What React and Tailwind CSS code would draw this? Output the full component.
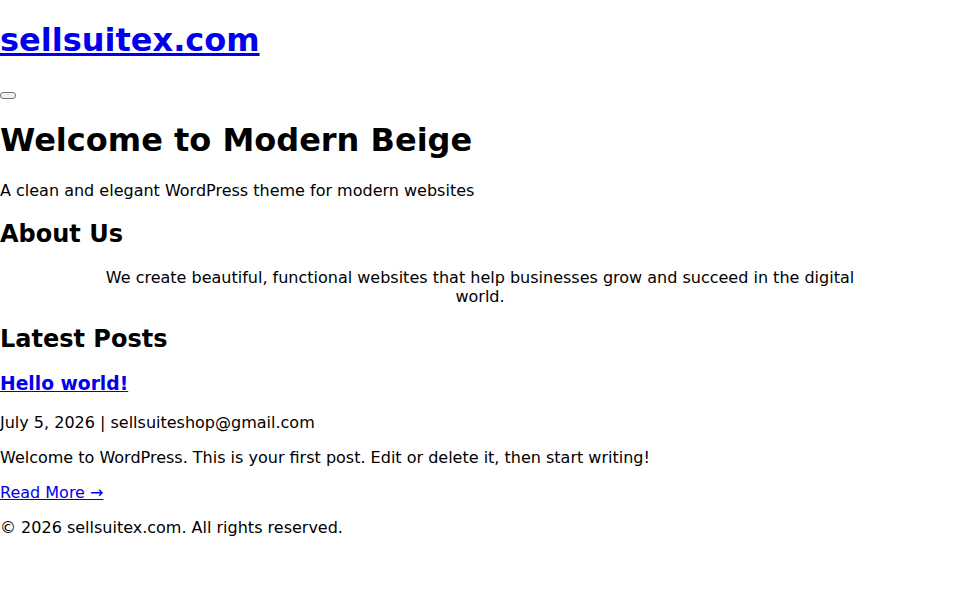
import React from 'react';

export default function App() {
  return (
    <div className="min-h-[600px] bg-white text-black font-['DejaVu_Sans',sans-serif] text-[16px] leading-[normal]">
      <header>
        <h1 className="my-[21.44px] text-[32px] font-bold">
          <a href="#" className="text-[#0000ee] underline">sellsuitex.com</a>
        </h1>
        <nav>
          <button className="align-baseline translate-y-[2px] w-4 h-[7px] rounded-[3px] border border-[#767676] bg-[#efefef]"></button>
        </nav>
      </header>

      <main>
        <section>
          <h1 className="my-[21.44px] text-[32px] font-bold">Welcome to Modern Beige</h1>
          <p className="my-4">A clean and elegant WordPress theme for modern websites</p>
        </section>

        <section>
          <h2 className="my-[19.92px] text-[24px] font-bold">About Us</h2>
          <div className="mx-auto max-w-3xl text-center">
            <p>We create beautiful, functional websites that help businesses grow and succeed in the digital world.</p>
          </div>
        </section>

        <section>
          <h2 className="my-[19.92px] text-[24px] font-bold">Latest Posts</h2>
          <article>
            <h3 className="my-[18.72px] text-[18.72px] font-bold">
              <a href="#" className="text-[#0000ee] underline">Hello world!</a>
            </h3>
            <p className="my-4">July 5, 2026 | sellsuiteshop@gmail.com</p>
            <p className="my-4">Welcome to WordPress. This is your first post. Edit or delete it, then start writing!</p>
            <a href="#" className="text-[#0000ee] underline">Read More →</a>
          </article>
        </section>
      </main>

      <footer>
        <p className="my-4">© 2026 sellsuitex.com. All rights reserved.</p>
      </footer>
    </div>
  );
}
